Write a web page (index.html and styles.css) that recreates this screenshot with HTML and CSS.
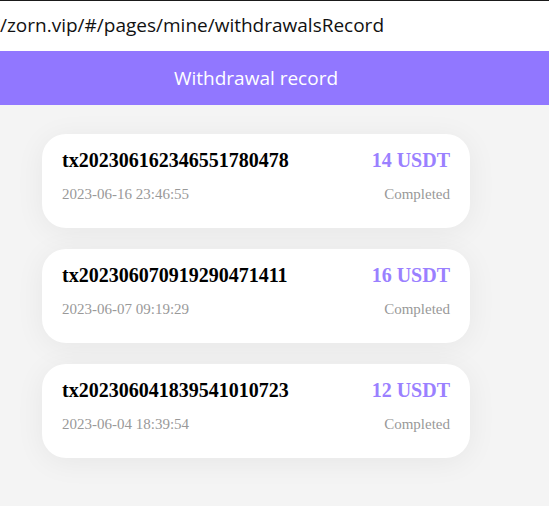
FILE: index.html
```html
<!DOCTYPE html>
<html>
<head>
<meta charset="utf-8">
<link rel="stylesheet" href="styles.css">
</head>
<body>
<div class="urlbar"><span class="url">//zorn.vip/#/pages/mine/withdrawalsRecord</span></div>
<header class="nav"><div class="nav-inner">Withdrawal record</div></header>
<main class="list">
  <div class="card">
    <div class="row top"><span class="tx">tx202306162346551780478</span><span class="amt">14 USDT</span></div>
    <div class="row sub"><span>2023-06-16 23:46:55</span><span>Completed</span></div>
  </div>
  <div class="card">
    <div class="row top"><span class="tx">tx202306070919290471411</span><span class="amt">16 USDT</span></div>
    <div class="row sub"><span>2023-06-07 09:19:29</span><span>Completed</span></div>
  </div>
  <div class="card">
    <div class="row top"><span class="tx">tx202306041839541010723</span><span class="amt">12 USDT</span></div>
    <div class="row sub"><span>2023-06-04 18:39:54</span><span>Completed</span></div>
  </div>
</main>
</body>
</html>
```
FILE: styles.css
```css
html, body { margin: 0; padding: 0; }
body {
  background: #f4f4f4;
  height: 506px;
  overflow: hidden;
}
.urlbar {
  height: 51px;
  background: #fff;
  border-top: 1px solid #1a1a1a;
  box-sizing: border-box;
  display: flex;
  align-items: center;
  overflow: hidden;
}
.url {
  font-family: "Open Sans", "Noto Sans", sans-serif;
  font-size: 19px;
  color: #111;
  margin-left: -7px;
  white-space: nowrap;
  padding-bottom: 2px;
}
.nav {
  height: 54px;
  background: #9177ff;
}
.nav-inner {
  width: 512px;
  height: 100%;
  display: flex;
  align-items: center;
  justify-content: center;
  color: #fff;
  font-family: "Open Sans", "Noto Sans", sans-serif;
  font-size: 19px;
}
.list {
  width: 512px;
  display: flex;
  flex-direction: column;
  align-items: center;
  gap: 21px;
  padding-top: 29px;
}
.card {
  width: 428px;
  height: 94px;
  box-sizing: border-box;
  background: #fff;
  border-radius: 24px;
  box-shadow: 0 4px 30px rgba(0, 0, 0, 0.06);
  padding: 14px 20px 0 20px;
  font-family: "Liberation Serif", serif;
}
.row {
  display: flex;
  justify-content: space-between;
  align-items: baseline;
}
.top {
  font-size: 20px;
  font-weight: bold;
  line-height: 24px;
}
.tx { color: #000; }
.amt { color: #9a80ff; }
.sub {
  margin-top: 13px;
  font-size: 15px;
  line-height: 18px;
  color: #999;
}
```
